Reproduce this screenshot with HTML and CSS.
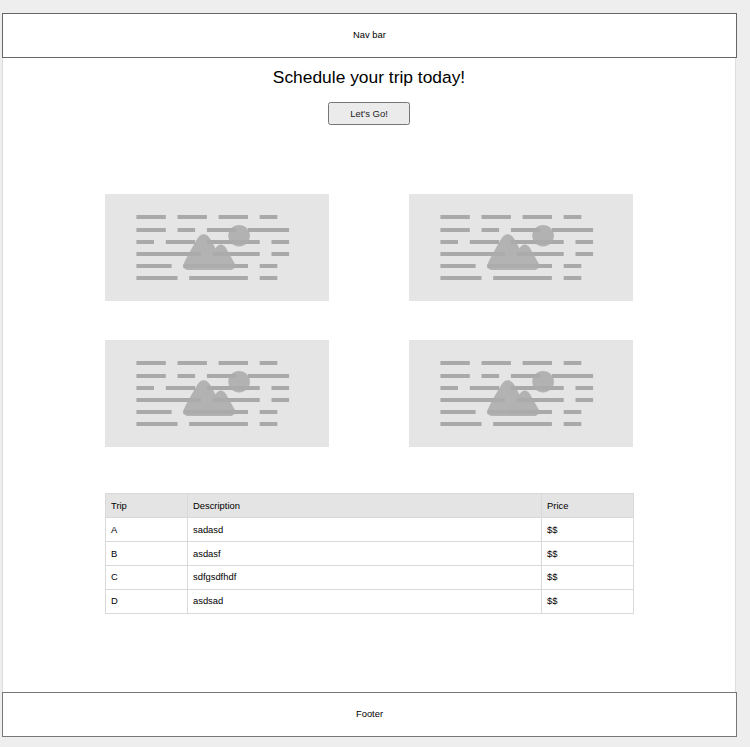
FILE: index.html
```
<!DOCTYPE html>
<html lang="en">
<head>
<meta charset="utf-8">
<title>Trip scheduler</title>
<link rel="stylesheet" href="styles.css">
</head>
<body>
<svg class="defs" aria-hidden="true">
  <symbol id="placeholder" viewBox="0 0 224 107">
    <g class="lines">
      <path d="M31.4 23h29.4M72.5 23h29.4M113.6 23h29.4M154.7 23h17.6"/>
      <path d="M31.4 36h29.4M72.5 36h17.6M101.9 36h29.4M143 36h41.1"/>
      <path d="M31.4 48h17.6M60.8 48h29.4M101.9 48h52.8M166.5 48h17.6"/>
      <path d="M31.4 60h64.6M107.7 60h47M166.5 60h17.6"/>
      <path d="M31.4 72h35.2M78.4 72h64.6M154.7 72h17.6"/>
      <path d="M31.4 84h41.1M84.2 84h58.7M154.7 84h17.6"/>
    </g>
    <g class="picture">
      <circle cx="134.1" cy="41.700" r="10.800"/>
      <path d="M84 76C79.500 76 77 73 78.800 69.500C82 62.500 87.500 53 92.500 44.500C96 38.800 101.500 38.800 105 44.500L110.500 54.500C113.500 49.200 117.800 49.200 121 54L129.700 69.500C131.500 73 129 76 124.500 76Z"/>
    </g>
  </symbol>
</svg>
<div class="paper">
  <header class="bar">Nav bar</header>
  <main>
    <h1>Schedule your trip today!</h1>
    <button class="go" type="button">Let's Go!</button>
    <section class="cards">
      <svg class="card"><use href="#placeholder"/></svg>
      <svg class="card"><use href="#placeholder"/></svg>
      <svg class="card"><use href="#placeholder"/></svg>
      <svg class="card"><use href="#placeholder"/></svg>
    </section>
    <table>
      <colgroup><col class="c-trip"><col class="c-desc"><col class="c-price"></colgroup>
      <thead><tr><th>Trip</th><th>Description</th><th>Price</th></tr></thead>
      <tbody>
        <tr><td>A</td><td>sadasd</td><td>$$</td></tr>
        <tr><td>B</td><td>asdasf</td><td>$$</td></tr>
        <tr><td>C</td><td>sdfgsdfhdf</td><td>$$</td></tr>
        <tr><td>D</td><td>asdsad</td><td>$$</td></tr>
      </tbody>
    </table>
  </main>
  <footer class="bar bar-footer">Footer</footer>
</div>
</body>
</html>
```
FILE: styles.css
```
* { box-sizing: border-box; }
body {
  margin: 0;
  padding: 13px 0 0 2px;
  height: 747px;
  overflow: hidden;
  background: #eee;
  color: #000;
  font: 9.4px/12px "Liberation Sans", Arial, sans-serif;
}
.defs { display: none; }
.paper {
  display: flex;
  flex-direction: column;
  width: 734px;
  height: 724px;
  background: #fff;
  border: solid #ddd;
  border-width: 0 1px;
}
.bar {
  flex: none;
  display: flex;
  align-items: center;
  justify-content: center;
  height: 45px;
  margin: 0 -2px 0 -1px;
  padding-bottom: 2px;
  background: #fff;
  border: 1px solid #666;
}
.bar-footer { border-color: #777; }
main {
  flex: 1;
  display: flex;
  flex-direction: column;
  align-items: center;
}
h1 {
  margin: 9px 0 0;
  font-size: 17.4px;
  line-height: 20px;
  font-weight: 400;
  white-space: nowrap;
}
.go {
  width: 82px;
  height: 23px;
  margin-top: 15px;
  padding: 0;
  border: 1px solid #777;
  border-radius: 2.500px;
  background: #ebebeb;
  color: #222;
  font: inherit;
  font-size: 9.5px;
}
.cards {
  display: grid;
  grid-template-columns: 224px 224px;
  gap: 39px 80px;
  margin-top: 69px;
}
.card {
  display: block;
  width: 224px;
  height: 107px;
  background: #e5e5e5;
}
.lines { stroke: #a9a9a9; stroke-width: 4; fill: none; }
.picture { fill: #acacac; opacity: .88; }
table {
  width: 529px;
  margin: 46px 0 0 1px;
  table-layout: fixed;
  border-collapse: collapse;
}
.c-trip { width: 82px; }
.c-desc { width: 354px; }
.c-price { width: 92px; }
tr { height: 24px; }
th, td {
  padding: 0 5px;
  border: 1px solid #d9d9d9;
  text-align: left;
  font-weight: 400;
}
th { background: #e4e4e4; }
tr:nth-child(n+3) td { padding-bottom: 2px; }
```
